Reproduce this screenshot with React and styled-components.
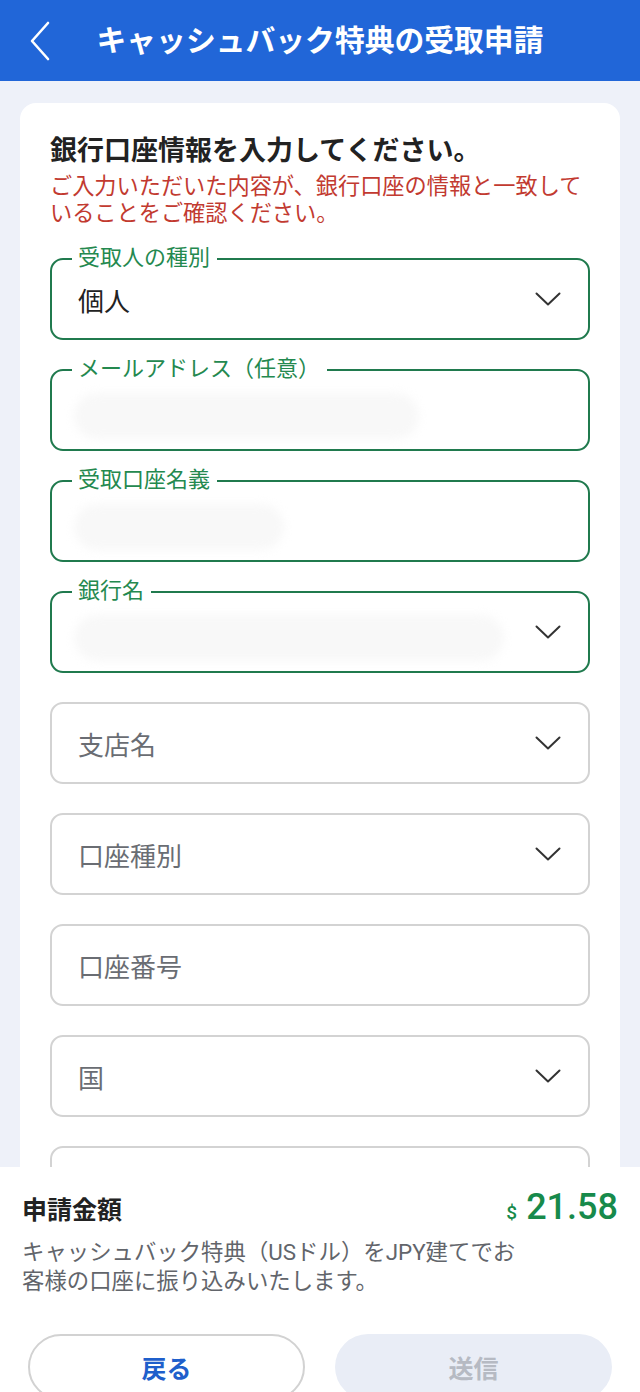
import React from "react";
import styled, { createGlobalStyle } from "styled-components";

const GlobalStyle = createGlobalStyle`
  html, body {
    margin: 0;
    padding: 0;
    background: #eef1f9;
  }
  body {
    font-family: Roboto, "Noto Sans CJK JP", "Noto Sans", sans-serif;
    color: #222;
  }
  * { box-sizing: border-box; }
`;

const fields = [
  { label: "受取人の種別", value: "個人", select: true },
  { label: "メールアドレス（任意）", smudge: 345 },
  { label: "受取口座名義", smudge: 210 },
  { label: "銀行名", smudge: 430, select: true },
  { placeholder: "支店名", select: true },
  { placeholder: "口座種別", select: true },
  { placeholder: "口座番号" },
  { placeholder: "国", select: true },
  { placeholder: "" },
];

const Chevron = ({ color = "#333", width = 26, height = 14 }) => (
  <svg width={width} height={height} viewBox="0 0 26 14" fill="none">
    <path d="M1.5 1.5 L13 12.5 L24.5 1.5" stroke={color} strokeWidth="2" strokeLinecap="round" strokeLinejoin="round" />
  </svg>
);

export default function App() {
  return (
    <Page>
      <GlobalStyle />
      <Header>
        <BackButton aria-label="back">
          <svg width="22" height="40" viewBox="0 0 22 40" fill="none">
            <path d="M19 2 L3 20 L19 38" stroke="#fff" strokeWidth="2.6" strokeLinecap="round" strokeLinejoin="round" />
          </svg>
        </BackButton>
        <Title>キャッシュバック特典の受取申請</Title>
        <span />
      </Header>

      <Main>
        <Card>
          <Heading>銀行口座情報を入力してください。</Heading>
          <Warning>ご入力いただいた内容が、銀行口座の情報と一致していることをご確認ください。</Warning>
          <FieldList>
            {fields.map((f, i) => (
              <Field key={i} $active={!!f.label}>
                {f.label && <Label>{f.label}</Label>}
                <Value $placeholder={!f.value}>
                  {f.value || f.placeholder}
                  {f.smudge && <Smudge style={{ width: f.smudge }} />}
                </Value>
                {f.select && <Chevron />}
              </Field>
            ))}
          </FieldList>
        </Card>
      </Main>

      <Footer>
        <AmountRow>
          <AmountLabel>申請金額</AmountLabel>
          <Amount>
            <Currency>$</Currency>21.58
          </Amount>
        </AmountRow>
        <Note>
          キャッシュバック特典（USドル）をJPY建てでお
          <br />
          客様の口座に振り込みいたします。
        </Note>
        <Buttons>
          <Button>戻る</Button>
          <Button $disabled>送信</Button>
        </Buttons>
      </Footer>
    </Page>
  );
}

const Page = styled.div`
  display: flex;
  flex-direction: column;
  height: 100vh;
  overflow: hidden;
`;

const Header = styled.header`
  flex: none;
  height: 81px;
  background: #2166d8;
  display: grid;
  grid-template-columns: 70px 1fr 70px;
  align-items: center;
`;

const BackButton = styled.button`
  border: none;
  background: none;
  padding: 0 0 0 29px;
  height: 40px;
  display: flex;
  align-items: center;
`;

const Title = styled.h1`
  margin: 0;
  text-align: center;
  color: #fff;
  font-size: 29.8px;
  font-weight: 700;
  line-height: 1;
  white-space: nowrap;
`;

const Main = styled.main`
  flex: 1;
  min-height: 0;
  overflow: hidden;
  padding: 22px 20px 0;
`;

const Card = styled.section`
  background: #fff;
  border-radius: 16px;
  padding: 31px 30px 40px;
`;

const Heading = styled.h2`
  margin: 0;
  font-size: 27px;
  line-height: 34px;
  font-weight: 700;
  color: #222;
`;

const Warning = styled.p`
  margin: 5px 0 0;
  font-size: 22.2px;
  line-height: 27px;
  color: #c23a30;
`;

const FieldList = styled.div`
  display: flex;
  flex-direction: column;
  gap: 29px;
  margin-top: 31px;
`;

const Field = styled.div`
  position: relative;
  height: 82px;
  border: 2px solid ${(p) => (p.$active ? "#207a4e" : "#d3d3d3")};
  border-radius: 13px;
  display: flex;
  align-items: center;
  padding: 0 27px 0 26px;
`;

const Label = styled.span`
  position: absolute;
  top: -14px;
  left: 20px;
  padding: 0 7px 0 6px;
  background: #fff;
  color: #24894f;
  font-size: 22px;
  line-height: 24px;
`;

const Value = styled.div`
  flex: 1;
  display: flex;
  align-items: center;
  font-size: 26px;
  color: ${(p) => (p.$placeholder ? "#6a6d73" : "#222")};
`;

const Smudge = styled.span`
  display: inline-block;
  height: 46px;
  margin: 12px 0 0 -4px;
  border-radius: 24px;
  background: #f8f8f8;
  filter: blur(5px);
`;

const Footer = styled.footer`
  flex: none;
  height: 225px;
  background: #fff;
  padding: 23px 22px 0;
`;

const AmountRow = styled.div`
  display: flex;
  justify-content: space-between;
  align-items: baseline;
`;

const AmountLabel = styled.div`
  font-size: 25px;
  font-weight: 700;
  line-height: 34px;
  color: #222;
`;

const Amount = styled.div`
  font-family: Roboto, sans-serif;
  font-size: 36px;
  font-weight: 500;
  line-height: 34px;
  color: #178a4b;
`;

const Currency = styled.span`
  font-size: 19px;
  margin-right: 9px;
`;

const Note = styled.p`
  margin: 8px 0 0;
  font-size: 22.4px;
  line-height: 29px;
  color: #62656b;
`;

const Buttons = styled.div`
  display: grid;
  grid-template-columns: 1fr 1fr;
  gap: 30px;
  margin: 38px 6px 0;
`;

const Button = styled.button`
  height: 66px;
  border-radius: 33px;
  font-family: inherit;
  font-size: 25px;
  font-weight: 700;
  border: ${(p) => (p.$disabled ? "none" : "2px solid #d2d2d2")};
  background: ${(p) => (p.$disabled ? "#e9edf6" : "#fff")};
  color: ${(p) => (p.$disabled ? "#b6bac3" : "#1f5fcb")};
`;
